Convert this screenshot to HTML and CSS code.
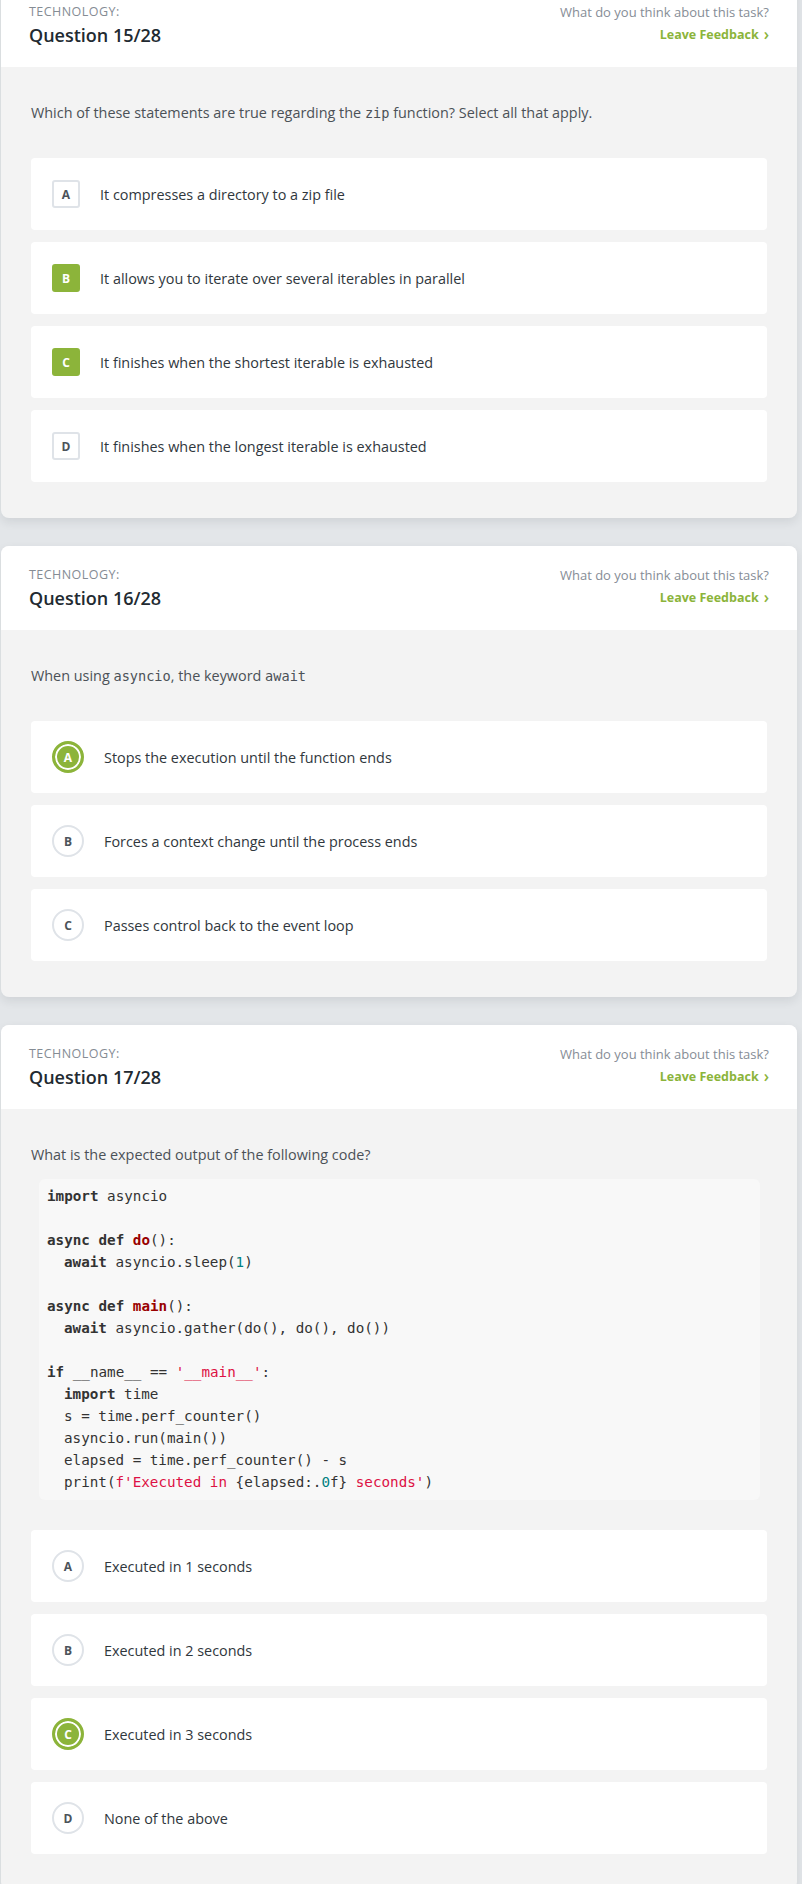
FILE: index.html
```html
<!DOCTYPE html>
<html lang="en">
<head>
<meta charset="utf-8">
<title>Quiz</title>
<link rel="stylesheet" href="styles.css">
</head>
<body>
<div class="list">

  <section class="card">
    <header class="card-head">
      <div class="head-left">
        <div class="cat">TECHNOLOGY:</div>
        <div class="qnum">Question 15/28</div>
      </div>
      <div class="head-right">
        <div class="ask">What do you think about this task?</div>
        <a class="feedback">Leave Feedback <span class="chev">&#8250;</span></a>
      </div>
    </header>
    <div class="card-body">
      <p class="question">Which of these statements are true regarding the <code>zip</code> function? Select all that apply.</p>
      <div class="options">
        <div class="option"><span class="badge sq">A</span><span class="opt-text">It compresses a directory to a zip file</span></div>
        <div class="option"><span class="badge sq on">B</span><span class="opt-text">It allows you to iterate over several iterables in parallel</span></div>
        <div class="option"><span class="badge sq on">C</span><span class="opt-text">It finishes when the shortest iterable is exhausted</span></div>
        <div class="option"><span class="badge sq">D</span><span class="opt-text">It finishes when the longest iterable is exhausted</span></div>
      </div>
    </div>
  </section>

  <section class="card">
    <header class="card-head">
      <div class="head-left">
        <div class="cat">TECHNOLOGY:</div>
        <div class="qnum">Question 16/28</div>
      </div>
      <div class="head-right">
        <div class="ask">What do you think about this task?</div>
        <a class="feedback">Leave Feedback <span class="chev">&#8250;</span></a>
      </div>
    </header>
    <div class="card-body">
      <p class="question">When using <code>asyncio</code>, the keyword <code>await</code></p>
      <div class="options">
        <div class="option"><span class="badge rd on">A</span><span class="opt-text">Stops the execution until the function ends</span></div>
        <div class="option"><span class="badge rd">B</span><span class="opt-text">Forces a context change until the process ends</span></div>
        <div class="option"><span class="badge rd">C</span><span class="opt-text">Passes control back to the event loop</span></div>
      </div>
    </div>
  </section>

  <section class="card">
    <header class="card-head">
      <div class="head-left">
        <div class="cat">TECHNOLOGY:</div>
        <div class="qnum">Question 17/28</div>
      </div>
      <div class="head-right">
        <div class="ask">What do you think about this task?</div>
        <a class="feedback">Leave Feedback <span class="chev">&#8250;</span></a>
      </div>
    </header>
    <div class="card-body">
      <p class="question">What is the expected output of the following code?</p>
      <div class="code">
        <div class="ln"><span class="kw">import</span> asyncio</div>
        <div class="ln"></div>
        <div class="ln"><span class="kw">async</span> <span class="kw">def</span> <span class="fn">do</span>():</div>
        <div class="ln in"><span class="kw">await</span> asyncio.sleep(<span class="num">1</span>)</div>
        <div class="ln"></div>
        <div class="ln"><span class="kw">async</span> <span class="kw">def</span> <span class="fn">main</span>():</div>
        <div class="ln in"><span class="kw">await</span> asyncio.gather(do(), do(), do())</div>
        <div class="ln"></div>
        <div class="ln"><span class="kw">if</span> __name__ == <span class="str">'__main__'</span>:</div>
        <div class="ln in"><span class="kw">import</span> time</div>
        <div class="ln in">s = time.perf_counter()</div>
        <div class="ln in">asyncio.run(main())</div>
        <div class="ln in">elapsed = time.perf_counter() - s</div>
        <div class="ln in">print(<span class="str">f'Executed in </span>{elapsed:.<span class="num">0</span>f}<span class="str"> seconds'</span>)</div>
      </div>
      <div class="options after-code">
        <div class="option"><span class="badge rd">A</span><span class="opt-text">Executed in 1 seconds</span></div>
        <div class="option"><span class="badge rd">B</span><span class="opt-text">Executed in 2 seconds</span></div>
        <div class="option"><span class="badge rd on">C</span><span class="opt-text">Executed in 3 seconds</span></div>
        <div class="option"><span class="badge rd">D</span><span class="opt-text">None of the above</span></div>
      </div>
    </div>
  </section>

</div>
</body>
</html>
```

FILE: styles.css
```css
* { box-sizing: border-box; }

html, body {
  margin: 0;
  padding: 0;
  background: #e3e6e9;
}

body {
  font-family: "Open Sans", "Noto Sans", sans-serif;
  color: #2f353b;
}

.list {
  display: flex;
  flex-direction: column;
  gap: 28px;
  margin-top: -17px;
  padding: 0 5px 40px 1px;
}

.card {
  background: #f3f3f3;
  border-radius: 8px;
  overflow: hidden;
  box-shadow: 0 4px 10px rgba(40, 50, 60, 0.10);
}

.card-head {
  background: #ffffff;
  height: 84px;
  padding: 21px 28px 0 28px;
  display: flex;
  justify-content: space-between;
}

.head-left, .head-right {
  display: flex;
  flex-direction: column;
}

.head-right { align-items: flex-end; }

.cat {
  font-size: 12.5px;
  line-height: 16px;
  color: #858c94;
  letter-spacing: 0.45px;
}

.qnum {
  margin-top: 3px;
  font-size: 18px;
  line-height: 24px;
  font-weight: 600;
  color: #222a31;
}

.ask {
  font-size: 13px;
  line-height: 16px;
  color: #868d96;
}

.feedback {
  margin-top: 6px;
  font-size: 12.5px;
  line-height: 18px;
  font-weight: 700;
  color: #8bb43a;
  display: flex;
  align-items: center;
  gap: 5px;
}

.chev {
  font-size: 16px;
  line-height: 18px;
  font-weight: 600;
  position: relative;
  top: -1px;
}

.card-body {
  padding: 36px 30px 36px 30px;
}

.question {
  margin: 0;
  height: 20px;
  font-size: 14.4px;
  line-height: 20px;
  color: #4b5157;
}

.question code {
  font-family: "DejaVu Sans Mono", "Liberation Mono", monospace;
  font-size: 13.6px;
  line-height: 1;
  color: #4b5157;
}

.options {
  margin-top: 35px;
  display: flex;
  flex-direction: column;
  gap: 12px;
}

.options.after-code { margin-top: 30px; }

.option {
  background: #ffffff;
  border-radius: 4px;
  height: 72px;
  display: flex;
  align-items: center;
  padding-left: 21px;
}

.opt-text {
  font-size: 14.4px;
  color: #30373d;
}

.badge {
  flex: none;
  display: flex;
  align-items: center;
  justify-content: center;
  font-size: 12px;
  font-weight: 700;
  color: #4c535a;
  background: #ffffff;
}

.badge.sq {
  width: 28px;
  height: 28px;
  border: 2px solid #dfe3e8;
  border-radius: 3px;
  margin-right: 20px;
}

.badge.sq.on {
  background: #8cb43a;
  border-color: #8cb43a;
  color: #ffffff;
}

.badge.rd {
  width: 32px;
  height: 32px;
  border: 2px solid #dfe3e8;
  border-radius: 50%;
  margin-right: 20px;
}

.badge.rd.on {
  background: #8cb43a;
  border: 3px solid #8cb43a;
  box-shadow: inset 0 0 0 2px #ffffff;
  color: #ffffff;
}

.code {
  margin: 14px 0 0 8px;
  width: 721px;
  height: 321px;
  background: #f8f8f8;
  border-radius: 6px;
  padding: 6px 8px 7px 8px;
  font-family: "DejaVu Sans Mono", "Liberation Mono", monospace;
  font-size: 14.25px;
  color: #333333;
  overflow: hidden;
}

.ln {
  height: 22px;
  line-height: 22px;
  white-space: pre;
}

.ln.in { padding-left: 17px; }

.code .kw { font-weight: 700; color: #333333; }
.code .fn { font-weight: 700; color: #990000; }
.code .num { color: #008080; }
.code .str { color: #dd1144; }
```
